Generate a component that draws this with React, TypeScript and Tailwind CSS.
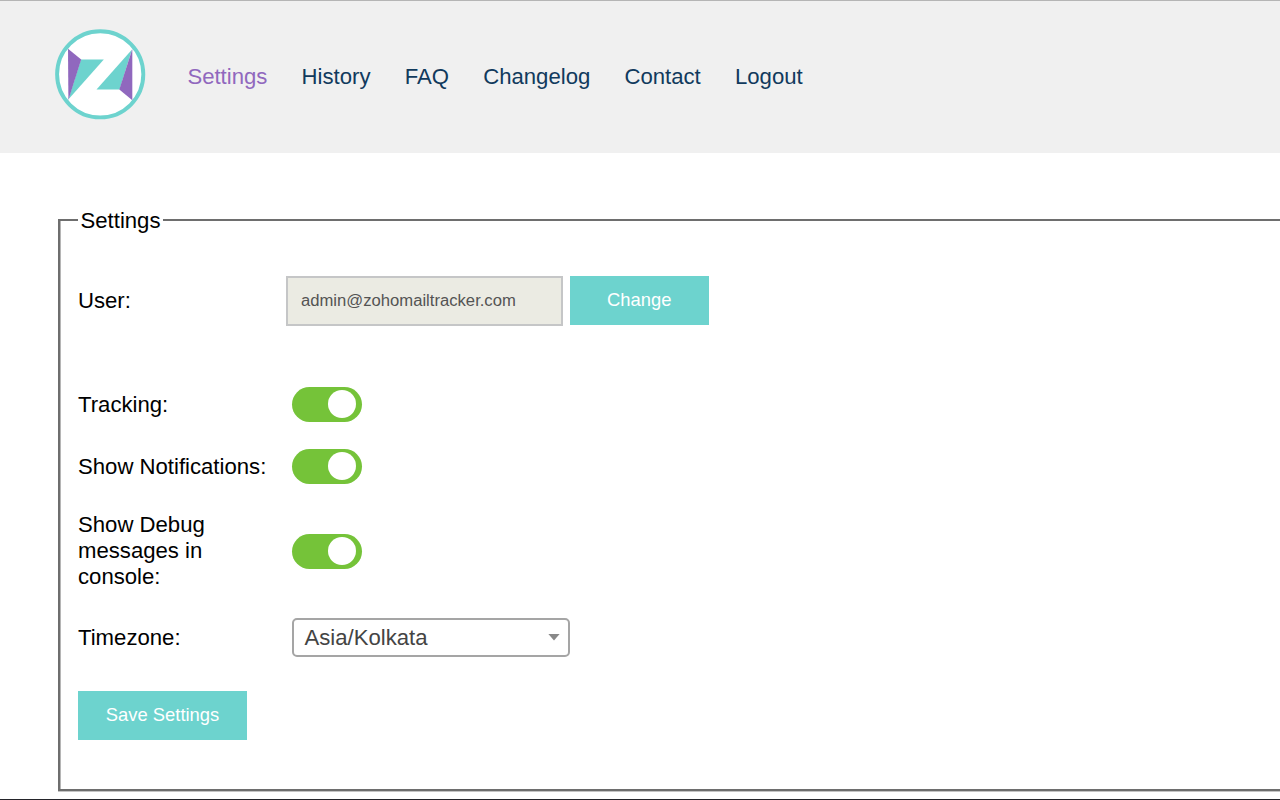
import React from "react";

const navItems = ["Settings", "History", "FAQ", "Changelog", "Contact", "Logout"];

function Logo() {
  return (
    <svg className="block h-[92px] w-[92px] shrink-0" viewBox="54 28 92 92">
      <circle cx="100.2" cy="74.3" r="43.1" fill="#fff" stroke="#6dd3ce" strokeWidth="3.9" />
      <path d="M81 59.5H103.8L68.3 99.5Z" fill="#6dd3ce" />
      <path d="M132 49.5L96.5 89.6H119.5Z" fill="#6dd3ce" />
      <path d="M68 48.8L81.2 59.5L68.4 100Z" fill="#9068be" />
      <path d="M132.3 49L119.3 89.6L132.3 100.2Z" fill="#9068be" />
    </svg>
  );
}

function Toggle({ label }: { label: string }) {
  return (
    <button
      role="switch"
      aria-checked="true"
      aria-label={label}
      className="ml-[6px] flex h-[35px] w-[70px] items-start justify-end rounded-full bg-[#75c339] pt-[3px] pr-[6px]"
    >
      <span className="h-7 w-7 rounded-full bg-white" />
    </button>
  );
}

function Row({ label, className, children }: { label: string; className: string; children: React.ReactNode }) {
  return (
    <div className={`flex items-center ${className}`}>
      <div className="w-[208px] shrink-0 pr-4">{label}</div>
      {children}
    </div>
  );
}

export default function App() {
  return (
    <div className="flex h-[800px] w-[1280px] flex-col overflow-hidden border-t border-b border-t-[#b5b5b5] border-b-[#24242a] bg-white font-['Liberation_Sans',Arial,sans-serif] text-[22.15px] leading-[26px] text-black">
      <header className="flex h-[152px] shrink-0 items-start bg-[#f0f0f0] pt-[27px] pl-[54px]">
        <Logo />
        <nav className="mt-[36px] ml-[41.4px] flex gap-[34.2px] text-[#113a5d]">
          {navItems.map((item, i) => (
            <a key={item} href="#" className={i === 0 ? "text-[#9068be]" : ""}>
              {item}
            </a>
          ))}
        </nav>
      </header>
      <fieldset className="mt-[55px] ml-[58px] h-[583px] w-[1260px] shrink-0 border-2 border-[#6e6e6e] pl-[18px] shadow-[0_1px_0_#c4c4c4,inset_1px_0_0_#b5b5b5]">
        <legend className="h-[24px] px-[2.5px]">Settings</legend>
        <Row label="User:" className="mt-[44px] h-[50px]">
          <input
            readOnly
            aria-label="User"
            value="admin@zohomailtracker.com"
            className="mb-[1px] h-[50px] w-[277px] border-2 border-[#c5c6c7] bg-[#ebebe3] pr-2 pl-[13px] text-[16.65px] text-[#545454] outline-none"
          />
          <button className="mb-[1px] ml-[7px] h-[49px] w-[138.5px] bg-[#6dd3ce] pb-[2px] text-[18.4px] text-white">Change</button>
        </Row>
        <Row label="Tracking:" className="mt-[61px] h-[35px]">
          <Toggle label="Tracking" />
        </Row>
        <Row label="Show Notifications:" className="mt-[27px] h-[35px]">
          <Toggle label="Show Notifications" />
        </Row>
        <Row label="Show Debug messages in console:" className="mt-[28px] h-[78px]">
          <Toggle label="Show Debug messages in console" />
        </Row>
        <Row label="Timezone:" className="mt-[28px] h-[39px]">
          <button className="ml-[6px] flex h-[39px] w-[278px] items-center justify-between rounded-[5px] border-2 border-[#a5a5a5] pr-[8px] pl-[10.5px] text-[#444]">
            <span className="mt-[1px]">Asia/Kolkata</span>
            <svg className="h-[7px] w-[12px]" viewBox="0 0 12 7">
              <path d="M0.4 0H11.6L6 6.6Z" fill="#888" />
            </svg>
          </button>
        </Row>
        <button className="mt-[34px] block h-[49px] w-[169px] bg-[#6dd3ce] pb-[2px] text-[18.4px] text-white">Save Settings</button>
      </fieldset>
    </div>
  );
}
